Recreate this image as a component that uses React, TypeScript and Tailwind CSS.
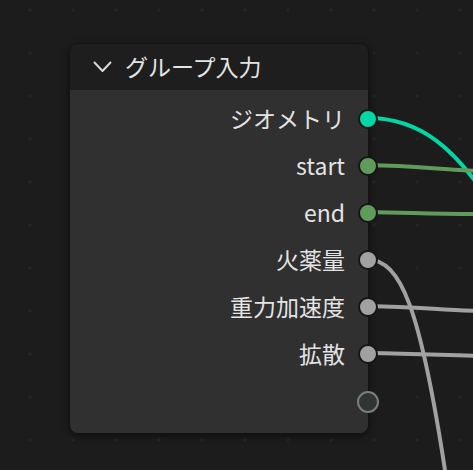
type Socket = { label: string; color: string; empty?: boolean };

const sockets: Socket[] = [
  { label: 'ジオメトリ', color: 'bg-[#00d6a3]' },
  { label: 'start', color: 'bg-[#5f9c5b]' },
  { label: 'end', color: 'bg-[#5f9c5b]' },
  { label: '火薬量', color: 'bg-[#a1a1a1]' },
  { label: '重力加速度', color: 'bg-[#a1a1a1]' },
  { label: '拡散', color: 'bg-[#a1a1a1]' },
  { label: '', color: '', empty: true },
];

const Wires = () => (
  <svg className="pointer-events-none absolute inset-0" width="473" height="470" viewBox="0 0 473 470">
    <g fill="none" strokeWidth="4" strokeLinecap="round">
      <path d="M368 118 C 420 118, 455 148, 492 205" stroke="#00d6a3" />
      <path d="M368 165 C 420 166, 440 170, 480 171" stroke="#5f9c5b" />
      <path d="M368 212 C 420 213, 440 214, 480 214" stroke="#5f9c5b" />
      <path d="M368 259 C 400 262, 420 300, 448 490" stroke="#a1a1a1" />
      <path d="M368 306 C 420 307, 440 310, 480 311" stroke="#a1a1a1" />
      <path d="M368 353 C 420 354, 440 355, 480 356" stroke="#a1a1a1" />
    </g>
  </svg>
);

const SocketRow = ({ socket }: { socket: Socket }) => (
  <div className="relative flex h-[47px] items-center justify-end pb-[2px] pr-[23px] text-[23px] text-[#e4e4e4]">
    {socket.label}
    {socket.empty ? (
      <span className="absolute right-[-11px] top-[13px] size-[22px] rounded-full border-2 border-[#7c7c7c] bg-[#2e3533]" />
    ) : (
      <span
        className={`absolute right-[-10px] top-[13px] size-[20px] rounded-full border-2 border-[#161616] ${socket.color}`}
      />
    )}
  </div>
);

const App = () => {
  return (
    <div
      className="relative h-[470px] w-[473px] overflow-hidden bg-[#1c1c1c] bg-[radial-gradient(circle,#282828_1px,transparent_1.5px)] bg-[size:43px_43px] bg-[position:8.5px_-11.5px] pl-[69px] pt-[43px]"
      style={{ fontFamily: '"Noto Sans CJK JP", "Noto Sans", sans-serif' }}
    >
      <Wires />
      <div className="relative w-[300px] rounded-[9px] border border-[#141414] shadow-[0_2px_6px_rgba(0,0,0,0.5)]">
        <div className="flex h-[46px] items-center gap-[13px] rounded-t-[8px] bg-[#1e1e1e] pb-[2px] pl-[23px] text-[23px] text-[#e4e4e4]">
          <svg width="19" height="12" viewBox="0 0 19 12" fill="none" className="mt-[2px]">
            <path d="M1.5 1.5 L9.5 10 L17.5 1.5" stroke="#d8d8d8" strokeWidth="2" strokeLinecap="round" strokeLinejoin="round" />
          </svg>
          <span>グループ入力</span>
        </div>
        <div className="rounded-b-[8px] bg-[#303030] pb-[8px] pt-[6px]">
          {sockets.map((s, i) => (
            <SocketRow key={i} socket={s} />
          ))}
        </div>
      </div>
    </div>
  );
};

export default App;
